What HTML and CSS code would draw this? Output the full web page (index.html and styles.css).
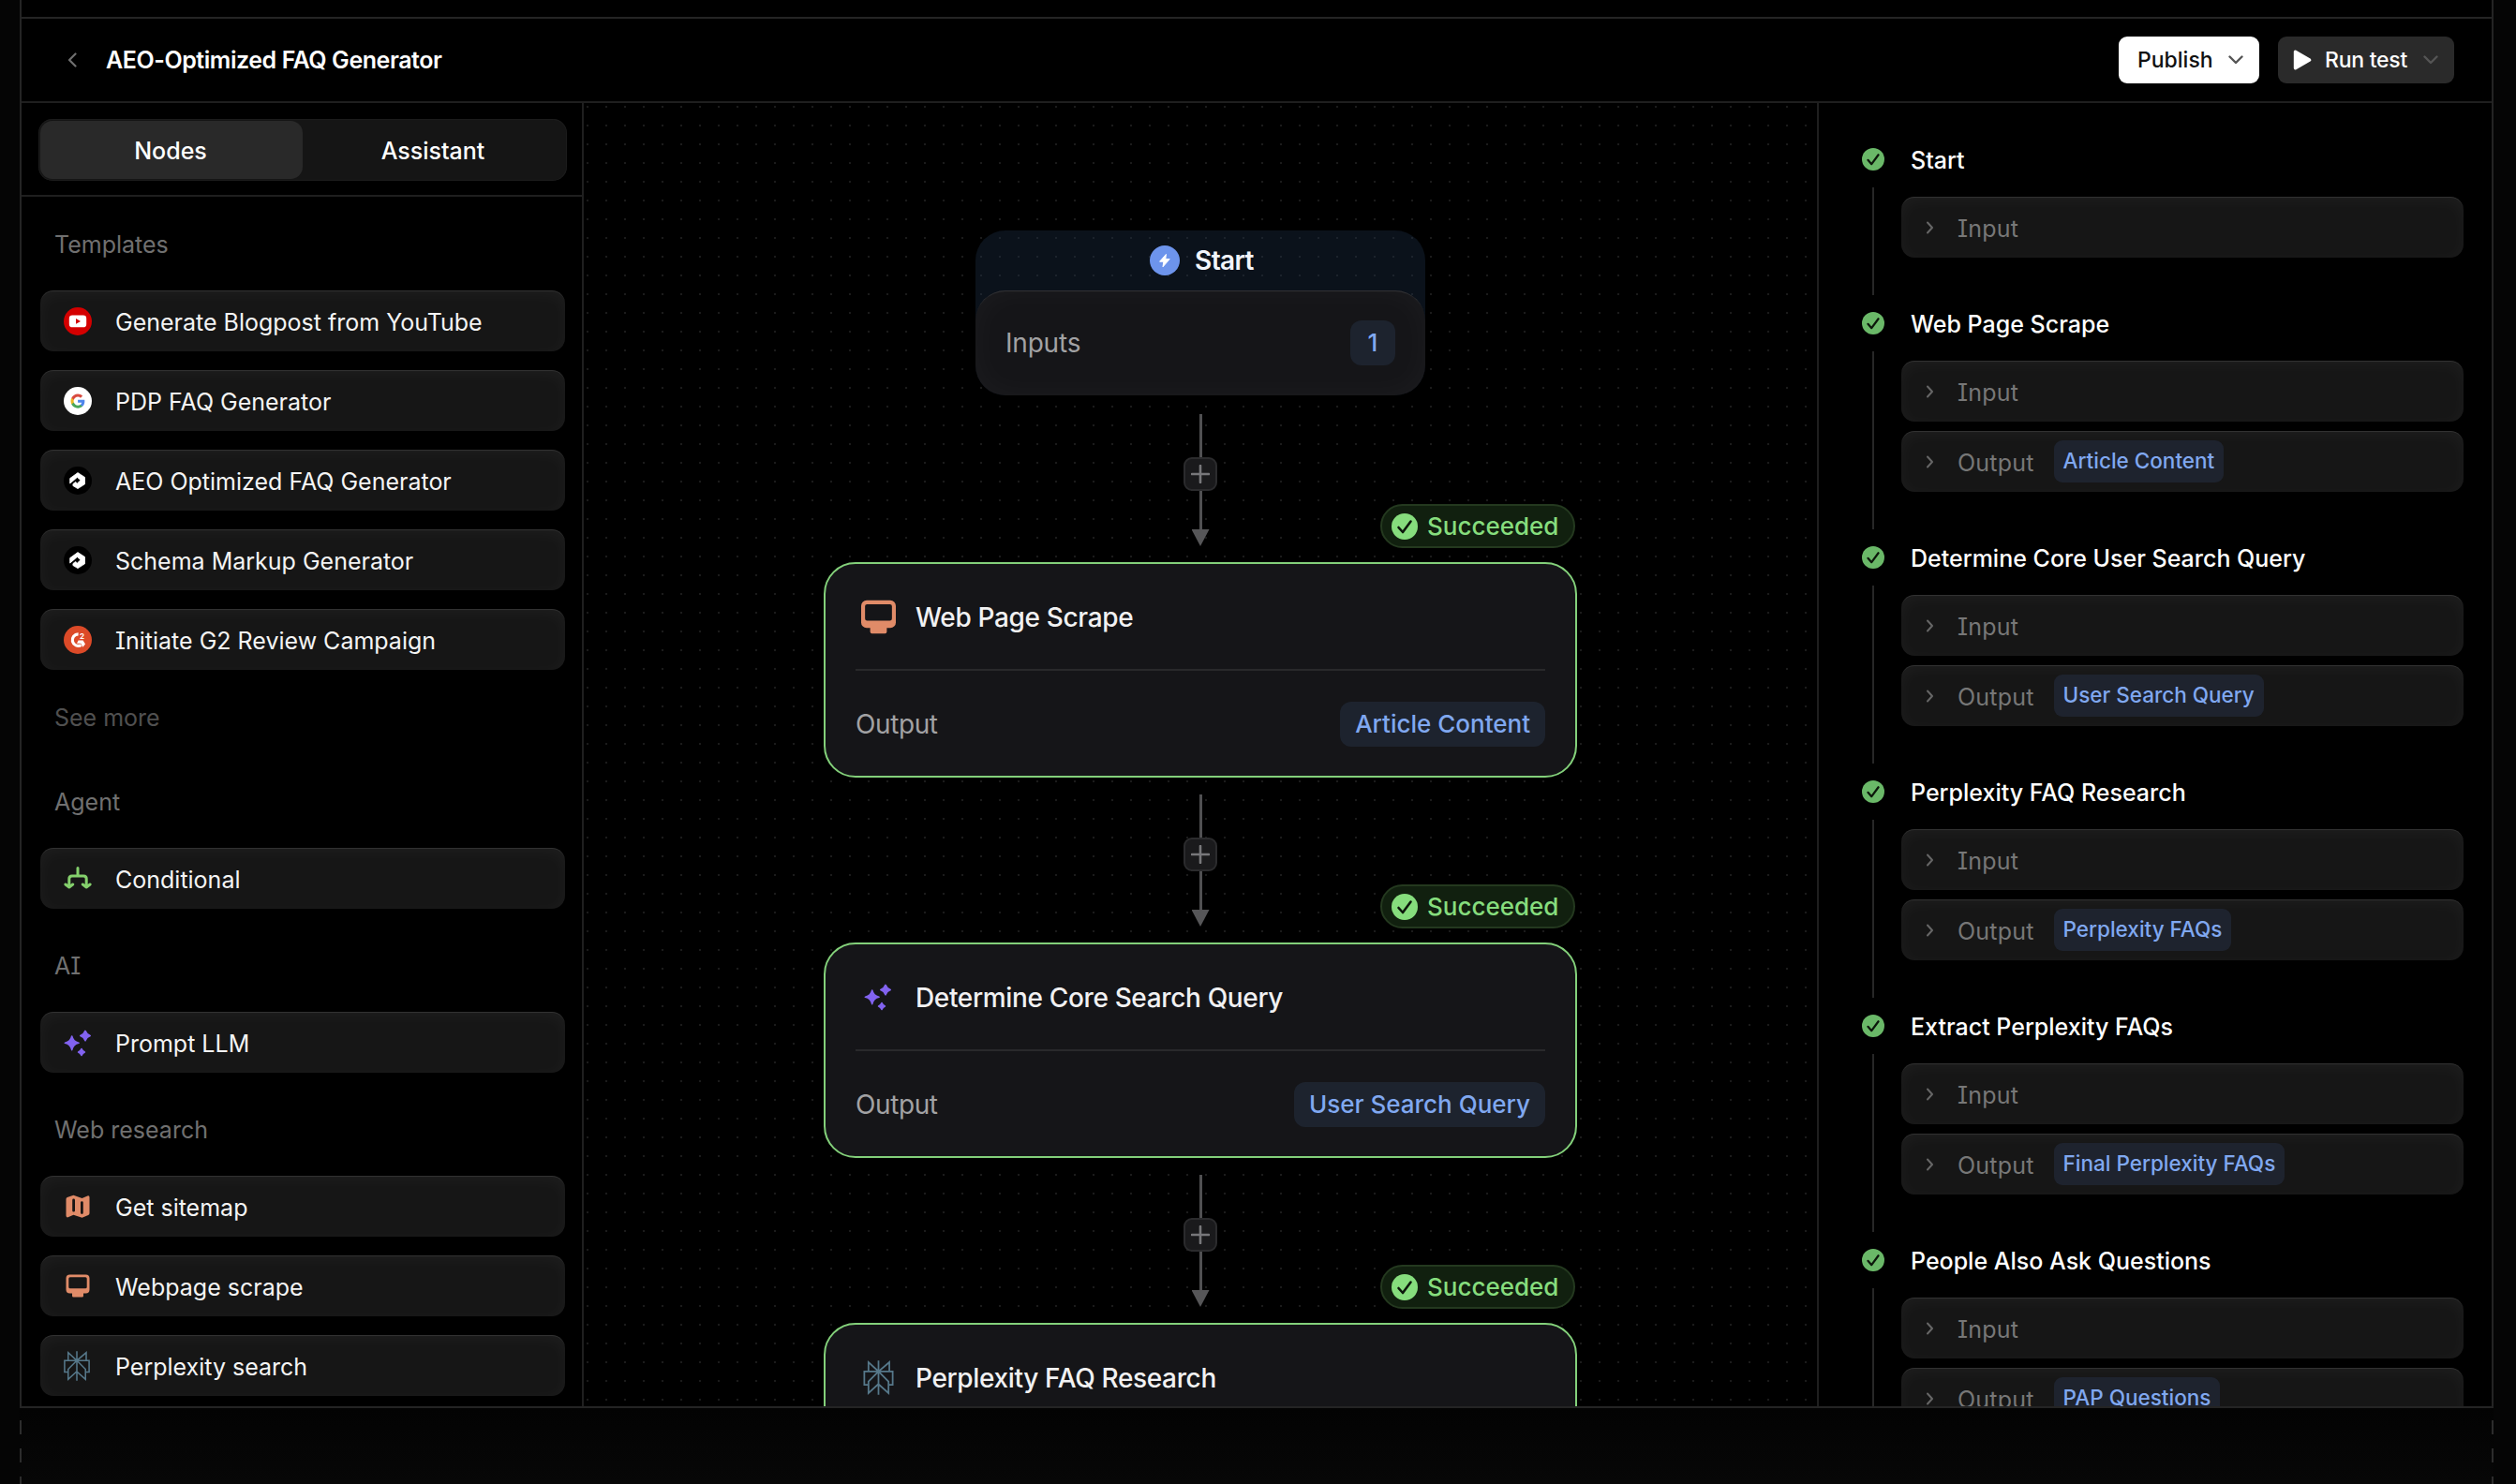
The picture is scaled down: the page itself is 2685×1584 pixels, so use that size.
FILE: index.html
```html
<!DOCTYPE html>
<html lang="en">
<head>
    <meta charset="UTF-8">
    <title>AEO-Optimized FAQ Generator</title>
    <link rel="stylesheet" href="styles.css">
</head>
<body>
    <!-- Shared icons -->
    <svg class="icon-defs" width="0" height="0">
        <symbol id="i-check" viewBox="0 0 28 28">
            <circle cx="14" cy="14" r="14" fill="currentColor"/>
            <path d="M7.5 15 L12 20 L20.5 8.5" fill="none" stroke="#0c170b" stroke-width="2.6" stroke-linecap="round" stroke-linejoin="round"/>
        </symbol>
        <symbol id="i-right" viewBox="0 0 8 14">
            <path d="M1.5 1.5 L6.5 7 L1.5 12.5" fill="none" stroke="currentColor" stroke-width="2" stroke-linecap="round" stroke-linejoin="round"/>
        </symbol>
        <symbol id="i-down" viewBox="0 0 16 10">
            <path d="M1.5 1.5 L8 8 L14.5 1.5" fill="none" stroke="currentColor" stroke-width="2.4" stroke-linecap="round" stroke-linejoin="round"/>
        </symbol>
        <symbol id="i-logo" viewBox="0 0 30 30">
            <circle cx="15" cy="15" r="15" fill="#000"/>
            <path fill="#fff" stroke="#fff" stroke-width=".8" stroke-linejoin="round" d="M15 6.6 L22.5 11.4 V18.8 L15 23.6 L9.9 20.5 V18.6 L12.6 16.4 L14.4 18 L18 14.6 L14.4 11.4 L11 14.4 L6.7 18 V12.6 Z"/>
        </symbol>
        <symbol id="i-sparkle" viewBox="0 0 30 30">
            <path fill="#8263f0" stroke="#8263f0" stroke-width="1.6" stroke-linejoin="round" d="M8.7 8 Q10 14 16 15.3 Q10 16.6 8.7 22.6 Q7.4 16.6 1.4 15.3 Q7.4 14 8.7 8Z M23 2.4 Q24.4 6.2 28.2 7.6 Q24.4 9 23 12.8 Q21.6 9 17.8 7.6 Q21.6 6.2 23 2.4Z M19 21.6 Q20 24 22.4 25 Q20 26 19 28.4 Q18 26 15.6 25 Q18 24 19 21.6Z"/>
        </symbol>
        <symbol id="i-screen" viewBox="0 0 30 30">
            <path fill="#e08b68" fill-rule="evenodd" d="M6.5 2.5 H23.5 A4 4 0 0 1 27.5 6.5 V18.5 A4 4 0 0 1 23.5 22.5 H21 V25.3 A1.3 1.3 0 0 1 19.7 26.5 H10.3 A1.3 1.3 0 0 1 9 25.3 V22.5 H6.5 A4 4 0 0 1 2.5 18.5 V6.5 A4 4 0 0 1 6.5 2.5Z M6.8 5.3 A1.5 1.5 0 0 0 5.3 6.8 V15.7 A1.5 1.5 0 0 0 6.8 17.2 H23.2 A1.5 1.5 0 0 0 24.7 15.7 V6.8 A1.5 1.5 0 0 0 23.2 5.3Z"/>
        </symbol>
        <symbol id="i-perplexity" viewBox="0 0 24 24">
            <path fill="#56788a" d="M22.3977 7.0896h-2.3106V.0676l-7.5094 6.3542V.1577h-1.1554v6.1966L4.4904 0v7.0896H1.6023v10.3976h2.8882V24l6.932-6.3591v6.2005h1.1554v-6.0469l6.9318 6.1807v-6.4879h2.8882V7.0896zm-3.4657-4.531v4.531h-5.355l5.355-4.531zm-13.2862.0676 4.8691 4.4634H5.6458V2.6262zM2.7576 16.332V8.245h7.8476l-6.1149 6.1147v1.9723H2.7576zm2.8882 5.0404v-3.8852h.0001v-2.6488l5.7763-5.7764v7.0111l-5.7764 5.2993zm12.7086.0248-5.7766-5.1509V9.0618l5.7766 5.7766v6.5588zm2.8882-5.0652h-1.733v-1.9723L13.3948 8.245h7.8478v8.087z"/>
        </symbol>
        <symbol id="i-plus" viewBox="0 0 20 20">
            <path d="M10 1 V19 M1 10 H19" stroke="#77777a" stroke-width="2.6" stroke-linecap="round"/>
        </symbol>
    </svg>

    <div class="page">
        <div class="edge-top"></div>

        <div class="window">
            <header class="header">
                <svg class="back" viewBox="0 0 10 16"><path d="M8.5 1.5 L2 8 L8.5 14.5" fill="none" stroke="#6f6f6f" stroke-width="2.2" stroke-linecap="round" stroke-linejoin="round"/></svg>
                <h1 class="title">AEO-Optimized FAQ Generator</h1>
                <button class="btn btn-publish">Publish <svg class="caret"><use href="#i-down"/></svg></button>
                <button class="btn btn-run"><svg class="play" viewBox="0 0 20 22"><path d="M2.5 2.2 V19.8 L17.6 11Z" fill="#fff" stroke="#fff" stroke-width="3.4" stroke-linejoin="round"/></svg>Run test <svg class="caret"><use href="#i-down"/></svg></button>
            </header>

            <div class="main">
                <aside class="sidebar">
                    <div class="tabs-row">
                        <div class="tabs">
                            <div class="tab active">Nodes</div>
                            <div class="tab">Assistant</div>
                        </div>
                    </div>

                    <div class="node-list">
                        <h2 class="group-title">Templates</h2>
                        <div class="group">
                            <div class="card item">
                                <svg class="item-icon" viewBox="0 0 30 30"><circle cx="15" cy="15" r="15" fill="#d40000"/><rect x="5.8" y="8.5" width="18.4" height="12.8" rx="3.4" fill="#fff"/><path d="M13 12 V17.8 L18 14.9Z" fill="#d40000"/></svg>
                                <span>Generate Blogpost from YouTube</span>
                            </div>
                            <div class="card item">
                                <svg class="item-icon" viewBox="0 0 30 30"><circle cx="15" cy="15" r="15" fill="#fff"/><g transform="translate(6.8 6.8) scale(.69)"><path fill="#4f86ec" d="M22.56 12.25c0-.78-.07-1.53-.2-2.25H12v4.26h5.92c-.26 1.37-1.04 2.53-2.21 3.31v2.77h3.57c2.08-1.92 3.28-4.74 3.28-8.09z"/><path fill="#4aa75a" d="M12 23c2.97 0 5.46-.98 7.28-2.66l-3.57-2.77c-.98.66-2.23 1.06-3.71 1.06-2.86 0-5.29-1.93-6.16-4.53H2.18v2.84C3.99 20.53 7.7 23 12 23z"/><path fill="#eeb822" d="M5.84 14.09c-.22-.66-.35-1.36-.35-2.09s.13-1.43.35-2.09V7.07H2.18C1.43 8.55 1 10.22 1 12s.43 3.45 1.18 4.93l3.66-2.84z"/><path fill="#d84b40" d="M12 5.38c1.62 0 3.06.56 4.21 1.64l3.15-3.15C17.45 2.09 14.97 1 12 1 7.7 1 3.99 3.47 2.18 7.07l3.66 2.84c.87-2.6 3.3-4.53 6.16-4.53z"/></g></svg>
                                <span>PDP FAQ Generator</span>
                            </div>
                            <div class="card item">
                                <svg class="item-icon"><use href="#i-logo"/></svg>
                                <span>AEO Optimized FAQ Generator</span>
                            </div>
                            <div class="card item">
                                <svg class="item-icon"><use href="#i-logo"/></svg>
                                <span>Schema Markup Generator</span>
                            </div>
                            <div class="card item">
                                <svg class="item-icon" viewBox="0 0 30 30"><circle cx="15" cy="15" r="15" fill="#dc4a28"/><path d="M15.6 8.8 A6.3 6.3 0 1 0 18.6 20.6" fill="none" stroke="#fff" stroke-width="3.2"/><path d="M15.6 15.6 H20.6 L23 19.4 L20.4 22.8 L18.2 18.8 H14Z" fill="#fff"/><text x="17" y="13.6" class="g2-mark">2</text></svg>
                                <span>Initiate G2 Review Campaign</span>
                            </div>
                        </div>
                        <div class="see-more">See more</div>

                        <h2 class="group-title after-more">Agent</h2>
                        <div class="group">
                            <div class="card item">
                                <svg class="item-icon" viewBox="0 0 30 30"><path d="M15 3.4 V12 M5.8 24 V15 Q5.8 12 8.8 12 H21.2 Q24.2 12 24.2 15 V24 M1.9 21 L5.8 24 L9.7 21 M20.3 21 L24.2 24 L28.1 21" fill="none" stroke="#84d06c" stroke-width="3" stroke-linecap="round" stroke-linejoin="round"/></svg>
                                <span>Conditional</span>
                            </div>
                        </div>

                        <h2 class="group-title">AI</h2>
                        <div class="group">
                            <div class="card item">
                                <svg class="item-icon"><use href="#i-sparkle"/></svg>
                                <span>Prompt LLM</span>
                            </div>
                        </div>

                        <h2 class="group-title">Web research</h2>
                        <div class="group">
                            <div class="card item">
                                <svg class="item-icon" viewBox="0 0 30 30"><path fill="#e08b68" d="M2.5 7 Q2.5 5.6 3.8 5 L10.4 2.8 L19.6 6 L25.4 3.4 Q27.5 2.8 27.5 5 V22 Q27.5 23.4 26.2 24 L19.6 26.8 L10.4 23.8 L4.6 26.3 Q2.5 26.8 2.5 24.6Z"/><path d="M10.6 8 V19.2 M19.4 10.6 V21.6" stroke="#191514" stroke-width="2.8" stroke-linecap="round"/></svg>
                                <span>Get sitemap</span>
                            </div>
                            <div class="card item">
                                <svg class="item-icon"><use href="#i-screen"/></svg>
                                <span>Webpage scrape</span>
                            </div>
                            <div class="card item">
                                <svg class="item-icon perplexity"><use href="#i-perplexity"/></svg>
                                <span>Perplexity search</span>
                            </div>
                        </div>
                    </div>
                </aside>

                <main class="canvas">
                    <div class="start-node">
                        <div class="start-head">
                            <svg class="bolt" viewBox="0 0 32 32"><circle cx="16" cy="16" r="16" fill="#6d94ec"/><path d="M17.4 9.4 L10.6 17.2 H14.8 L14 22.8 L21.2 14.6 H16.8Z" fill="#fff" stroke="#fff" stroke-width="1" stroke-linejoin="round"/></svg>
                            <span>Start</span>
                        </div>
                        <div class="start-body">
                            <span class="label">Inputs</span>
                            <span class="chip count">1</span>
                        </div>
                    </div>

                    <div class="connector first">
                        <div class="plus"><svg><use href="#i-plus"/></svg></div>
                        <div class="arrow"></div>
                    </div>

                    <div class="node">
                        <div class="badge"><svg><use href="#i-check"/></svg>Succeeded</div>
                        <div class="node-head">
                            <svg class="node-icon" viewBox="2.5 2 25 25"><use href="#i-screen" width="30" height="30"/></svg>
                            <span>Web Page Scrape</span>
                        </div>
                        <div class="node-row">
                            <span class="label">Output</span>
                            <span class="chip">Article Content</span>
                        </div>
                    </div>

                    <div class="connector">
                        <div class="plus"><svg><use href="#i-plus"/></svg></div>
                        <div class="arrow"></div>
                    </div>

                    <div class="node">
                        <div class="badge"><svg><use href="#i-check"/></svg>Succeeded</div>
                        <div class="node-head">
                            <svg class="node-icon small"><use href="#i-sparkle"/></svg>
                            <span>Determine Core Search Query</span>
                        </div>
                        <div class="node-row">
                            <span class="label">Output</span>
                            <span class="chip">User Search Query</span>
                        </div>
                    </div>

                    <div class="connector">
                        <div class="plus"><svg><use href="#i-plus"/></svg></div>
                        <div class="arrow"></div>
                    </div>

                    <div class="node">
                        <div class="badge"><svg><use href="#i-check"/></svg>Succeeded</div>
                        <div class="node-head">
                            <svg class="node-icon"><use href="#i-perplexity"/></svg>
                            <span>Perplexity FAQ Research</span>
                        </div>
                    </div>
                </main>

                <section class="run-log">
                    <div class="step">
                        <div class="rail"><svg class="done"><use href="#i-check"/></svg></div>
                        <div class="step-body">
                            <h3>Start</h3>
                            <div class="card io"><svg><use href="#i-right"/></svg><span>Input</span></div>
                        </div>
                    </div>
                    <div class="step">
                        <div class="rail"><svg class="done"><use href="#i-check"/></svg></div>
                        <div class="step-body">
                            <h3>Web Page Scrape</h3>
                            <div class="card io"><svg><use href="#i-right"/></svg><span>Input</span></div>
                            <div class="card io"><svg><use href="#i-right"/></svg><span>Output</span><span class="tag">Article Content</span></div>
                        </div>
                    </div>
                    <div class="step">
                        <div class="rail"><svg class="done"><use href="#i-check"/></svg></div>
                        <div class="step-body">
                            <h3>Determine Core User Search Query</h3>
                            <div class="card io"><svg><use href="#i-right"/></svg><span>Input</span></div>
                            <div class="card io"><svg><use href="#i-right"/></svg><span>Output</span><span class="tag">User Search Query</span></div>
                        </div>
                    </div>
                    <div class="step">
                        <div class="rail"><svg class="done"><use href="#i-check"/></svg></div>
                        <div class="step-body">
                            <h3>Perplexity FAQ Research</h3>
                            <div class="card io"><svg><use href="#i-right"/></svg><span>Input</span></div>
                            <div class="card io"><svg><use href="#i-right"/></svg><span>Output</span><span class="tag">Perplexity FAQs</span></div>
                        </div>
                    </div>
                    <div class="step">
                        <div class="rail"><svg class="done"><use href="#i-check"/></svg></div>
                        <div class="step-body">
                            <h3>Extract Perplexity FAQs</h3>
                            <div class="card io"><svg><use href="#i-right"/></svg><span>Input</span></div>
                            <div class="card io"><svg><use href="#i-right"/></svg><span>Output</span><span class="tag">Final Perplexity FAQs</span></div>
                        </div>
                    </div>
                    <div class="step">
                        <div class="rail"><svg class="done"><use href="#i-check"/></svg></div>
                        <div class="step-body">
                            <h3>People Also Ask Questions</h3>
                            <div class="card io"><svg><use href="#i-right"/></svg><span>Input</span></div>
                            <div class="card io"><svg><use href="#i-right"/></svg><span>Output</span><span class="tag">PAP Questions</span></div>
                        </div>
                    </div>
                </section>
            </div>
        </div>

        <div class="edge-bottom"></div>
    </div>
</body>
</html>
```

FILE: styles.css
```css
* {
    box-sizing: border-box;
}
body {
    margin: 0;
    height: 1584px;
    overflow: hidden;
    background: #050505;
    color: #fff;
    font-family: Inter, sans-serif;
    font-size: 25px;
    line-height: 30px;
}
h1, h2, h3 {
    margin: 0;
    font-size: 25px;
    font-weight: 500;
}
svg {
    display: block;
    flex-shrink: 0;
}
.icon-defs {
    position: absolute;
}
.page {
    width: 2640px;
    margin-left: 21px;
}
.edge-top {
    height: 18px;
    border: solid #242424;
    border-width: 0 2px;
    background: #000;
}
.window {
    height: 1485px;
    border: 2px solid #242424;
    background: #000;
    overflow: hidden;
}
/* dashed guide lines that go on below the window */
.edge-bottom {
    height: 81px;
    background:
        repeating-linear-gradient(#2c2c2c 0 15px, transparent 15px 30px) left 13px / 2px 100% no-repeat,
        repeating-linear-gradient(#2c2c2c 0 15px, transparent 15px 30px) right 13px / 2px 100% no-repeat,
        linear-gradient(#030303, #070707);
}

/* Header */
.header {
    display: flex;
    align-items: center;
    height: 90px;
    padding: 0 40px 0 49px;
    border-bottom: 2px solid #1f1f1f;
}
.back {
    width: 10px;
    height: 16px;
    margin-right: 31px;
}
.title {
    margin-right: auto;
    font-weight: 600;
    letter-spacing: -0.44px;
}
.btn {
    display: flex;
    align-items: center;
    height: 50px;
    border: none;
    border-radius: 9px;
    font-family: inherit;
    font-size: 23px;
    font-weight: 500;
}
.btn-publish {
    width: 150px;
    padding: 0 17px 0 20px;
    justify-content: space-between;
    background: #fff;
    color: #111;
}
.btn-run {
    width: 188px;
    margin-left: 20px;
    padding: 0 17px 0 16px;
    background: #2a2a2a;
    color: #fff;
    letter-spacing: -0.25px;
}
.caret {
    width: 16px;
    height: 10px;
    margin-left: auto;
    color: #555;
}
.play {
    width: 20px;
    height: 22px;
    margin-right: 14px;
}

.main {
    display: grid;
    grid-template-columns: 600px 1fr 720px;
    height: 1391px;
}

/* Sidebar */
.sidebar {
    border-right: 2px solid #1f1f1f;
}
.tabs-row {
    height: 100px;
    padding: 17px 16px 0 18px;
    border-bottom: 2px solid #1f1f1f;
}
.tabs {
    display: flex;
    width: 564px;
    height: 66px;
    padding: 2px;
    border-radius: 15px;
    background: #151515;
    box-shadow: inset 0 0 0 1px #1c1c1c;
}
.tab {
    flex: 1;
    display: flex;
    align-items: center;
    justify-content: center;
    padding: 2px 2px 0 0;
    border-radius: 13px;
    font-weight: 500;
}
.tab.active {
    background: #292929;
}
.node-list {
    padding: 0 18px 0 20px;
    font-feature-settings: "cv08";
}
.group-title,
.see-more {
    padding-left: 15px;
    font-weight: 400;
    color: #707070;
}
.group-title {
    padding-top: 46px;
    padding-bottom: 34px;
}
.group-title:first-child {
    padding-top: 36px;
}
.group-title.after-more {
    padding-top: 60px;
}
.see-more {
    padding-top: 36px;
    color: #505050;
}
.group {
    display: flex;
    flex-direction: column;
    gap: 20px;
}
.card {
    display: flex;
    align-items: center;
    height: 65px;
    border-radius: 14px;
    background: #161616;
    box-shadow:
        inset 0 2px 1px -1px rgba(255, 255, 255, 0.11),
        inset 0 4px 18px rgba(255, 255, 255, 0.04);
}
.item {
    padding: 0 25px;
    color: #f4f4f4;
}
.item span {
    padding-top: 2px;
}
.item-icon {
    width: 30px;
    height: 30px;
    margin-right: 25px;
}
.item-icon.perplexity {
    width: 32px;
    height: 32px;
    margin: 0 25px 0 -2px;
}
.g2-mark {
    font-size: 8px;
    font-weight: 700;
    fill: #fff;
}

/* Canvas */
.canvas {
    display: flex;
    flex-direction: column;
    align-items: center;
    height: 1391px;
    padding-top: 136px;
    overflow: hidden;
    background: radial-gradient(circle at 10px 10px, #1b1b1b 1px, transparent 1.6px) -6px -6px / 20px 20px;
    letter-spacing: -0.3px;
    font-size: 28px;
}
.start-node {
    flex-shrink: 0;
    width: 480px;
    height: 176px;
    border-radius: 32px;
    background: rgba(30, 50, 74, 0.36);
}
.start-head {
    display: flex;
    align-items: center;
    justify-content: center;
    gap: 16px;
    height: 64px;
    padding-left: 3px;
    color: #f2f5fb;
    font-weight: 600;
    letter-spacing: -0.6px;
}
.bolt {
    width: 32px;
    height: 32px;
}
.start-body {
    display: flex;
    align-items: center;
    justify-content: space-between;
    height: 112px;
    padding: 0 32px;
    border-radius: 32px;
    background: #151518;
    box-shadow:
        inset 0 2px 1px -1px rgba(255, 255, 255, 0.12),
        inset 0 0 36px rgba(255, 255, 255, 0.035);
}
.label {
    color: #a2a2a4;
    letter-spacing: -0.2px;
}
.chip {
    display: flex;
    align-items: center;
    justify-content: center;
    height: 48px;
    padding: 0 16px;
    border-radius: 12px;
    background: #1d232e;
    color: #80a8f0;
    font-size: 26px;
    font-weight: 500;
    letter-spacing: 0;
}
.chip.count {
    width: 48px;
    padding: 0;
}
.connector {
    flex-shrink: 0;
    display: flex;
    flex-direction: column;
    align-items: center;
    justify-content: space-between;
    height: 141px;
    margin: 18px 0 17px;
    padding-top: 46px;
    background: linear-gradient(#505052, #505052) center top / 3px 126px no-repeat;
}
.connector.first {
    margin-top: 20px;
}
.plus {
    display: flex;
    align-items: center;
    justify-content: center;
    width: 36px;
    height: 36px;
    border: 2px solid #2b2b2d;
    border-radius: 9px;
    background: #1a1a1c;
}
.plus svg {
    width: 20px;
    height: 20px;
}
.arrow {
    width: 19px;
    height: 18px;
    background: #565658;
    clip-path: polygon(0 0, 100% 0, 50% 100%);
}
.node {
    position: relative;
    flex-shrink: 0;
    width: 804px;
    height: 230px;
    padding: 0 32px;
    border: 2px solid #83d07a;
    border-radius: 34px;
    background: #151518;
}
.badge {
    position: absolute;
    top: -64px;
    right: 0;
    display: flex;
    align-items: center;
    gap: 10px;
    width: 208px;
    height: 47px;
    padding-left: 10px;
    border: 2px solid #24391f;
    border-radius: 24px;
    background: #11200f;
    color: #86dd7d;
    font-size: 26px;
    font-weight: 500;
    letter-spacing: 0;
}
.badge svg {
    width: 28px;
    height: 28px;
}
.node-head {
    display: flex;
    align-items: center;
    height: 112px;
    color: #f1f1f2;
    font-weight: 500;
    letter-spacing: -0.35px;
}
.node-head span {
    padding-top: 1px;
}
.node-head + .node-row {
    border-top: 2px solid #29292b;
}
.node-icon {
    width: 37px;
    height: 37px;
    margin: 0 21px 0 6px;
}
.node-icon.small {
    width: 30px;
    height: 30px;
    margin: 0 25px 0 9px;
}
.node-row {
    display: flex;
    align-items: center;
    justify-content: space-between;
    height: 115px;
}
.node-row .label {
    letter-spacing: -0.4px;
}

/* Run log */
.run-log {
    height: 1391px;
    padding: 30px 30px 0 46px;
    border-left: 2px solid #1f1f1f;
    overflow: hidden;
    font-feature-settings: "cv08";
}
.step {
    display: flex;
    gap: 18px;
}
.rail {
    display: flex;
    flex-direction: column;
    align-items: center;
    gap: 18px;
    width: 24px;
    padding-top: 18px;
}
.rail::after {
    content: "";
    flex: 1;
    width: 2px;
    background: #272727;
}
.done {
    width: 24px;
    height: 24px;
    color: #6ab868;
}
.step-body {
    flex: 1;
    display: flex;
    flex-direction: column;
    gap: 10px;
    padding-bottom: 40px;
}
.step-body h3 {
    height: 60px;
    padding: 16px 0 0 10px;
}
.io {
    padding: 0 26px;
    color: #777;
    letter-spacing: 0.2px;
}
.io svg {
    width: 9px;
    height: 14px;
    margin-right: 25px;
    color: #666;
}
.io span {
    padding-top: 2px;
}
.io .tag {
    height: 45px;
    margin-left: 21px;
    padding: 0 10px;
    border-radius: 9px;
    background: #1e232e;
    color: #80a8f0;
    font-size: 22.5px;
    font-weight: 500;
    line-height: 44px;
    letter-spacing: 0;
}
```
